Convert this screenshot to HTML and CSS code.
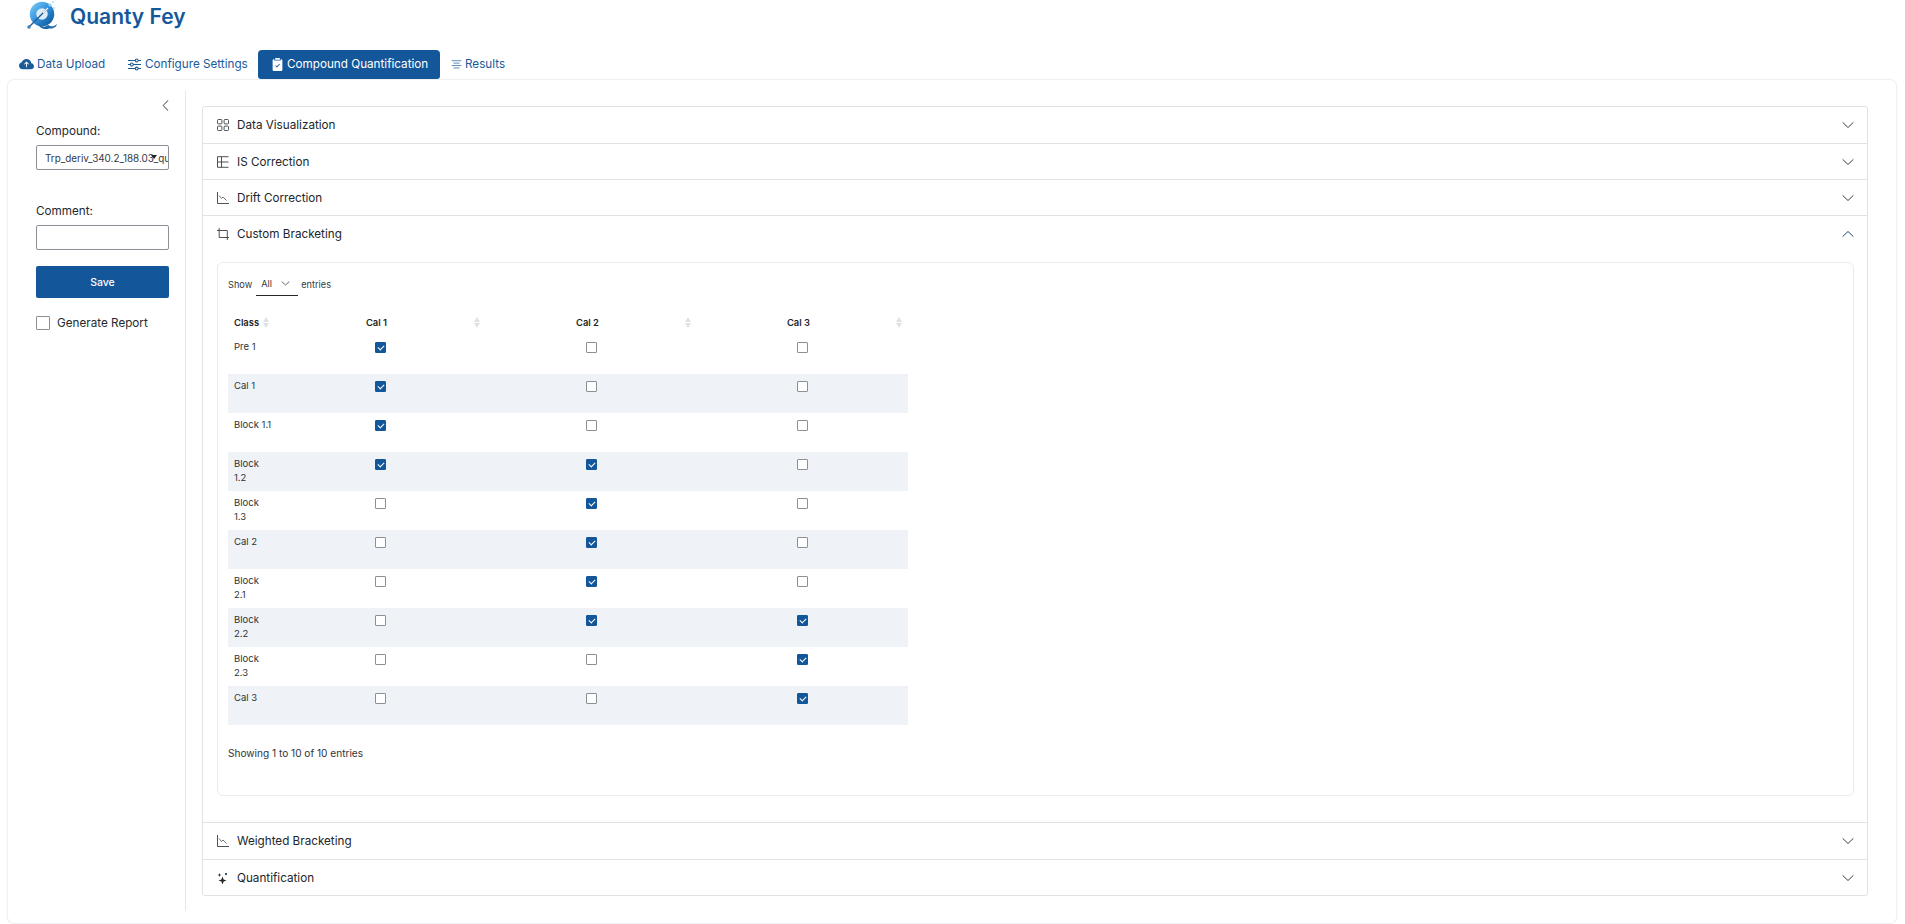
FILE: index.html
```html
<!DOCTYPE html>
<html lang="en">
<head>
<meta charset="utf-8">
<title>Quanty Fey</title>
<link rel="stylesheet" href="styles.css">
</head>
<body>
<header class="brand">
  <svg class="logo" viewBox="0 0 32 30" width="32" height="30">
    <defs><linearGradient id="lg" x1="0" y1="0" x2="1" y2="1"><stop offset="0" stop-color="#6fc0f0"/><stop offset=".5" stop-color="#2f8fdc"/><stop offset="1" stop-color="#13609f"/></linearGradient></defs>
    <circle cx="16" cy="14" r="9" fill="#dcecf8"/>
    <circle cx="16" cy="14" r="9" fill="none" stroke="url(#lg)" stroke-width="6.500"/>
    <path d="M11 23c3 3 7 5 11 2 3 2 6 2 9-1-.5 3-4 5-8 4.500-4 1.500-9 .5-12-5.500z" fill="#1868ac"/>
    <path d="M3 27 22 8" stroke="#2b5f92" stroke-width="1.500"/>
    <path d="M17 13 22 8" stroke="#e8f4fc" stroke-width="1.500"/>
    <circle cx="3" cy="27" r="1.700" fill="#3b7fbb"/>
    <circle cx="24" cy="5" r="1.600" fill="#8ed3f5"/><circle cx="28" cy="8" r=".9" fill="#a7dcf7"/><circle cx="27" cy="2" r=".9" fill="#a7dcf7"/><circle cx="30" cy="4" r=".6" fill="#c4e8fa"/>
  </svg>
  <h1 class="title">Quanty Fey</h1>
</header>
<nav class="tabs">
  <a class="tab t1"><svg class="ico" viewBox="0 0 16 16" width="15" height="15" fill="currentColor"><path d="M8 2a5.530 5.530 0 0 0-3.594 1.342c-.766.66-1.321 1.520-1.464 2.383C1.266 6.095 0 7.555 0 9.318 0 11.366 1.708 13 3.781 13h8.906C14.502 13 16 11.570 16 9.773c0-1.636-1.242-2.969-2.834-3.194C12.923 3.999 10.690 2 8 2zm2.354 5.146a.5.5 0 0 1-.708.708L8.500 6.707V10.500a.5.5 0 0 1-1 0V6.707L6.354 7.854a.5.5 0 1 1-.708-.708l2-2a.5.5 0 0 1 .708 0l2 2z"/></svg>Data Upload</a>
  <a class="tab t2"><svg class="ico" viewBox="0 0 16 16" width="13" height="13" fill="none" stroke="currentColor" stroke-width="1.300"><path d="M0 3h9M12.500 3H16M0 8h3M6.500 8H16M0 13h9M12.500 13H16"/><circle cx="10.700" cy="3" r="1.800"/><circle cx="4.700" cy="8" r="1.800"/><circle cx="10.700" cy="13" r="1.800"/></svg>Configure Settings</a>
  <a class="tab active"><svg class="ico" viewBox="0 0 16 16" width="13" height="13" fill="currentColor"><path d="M6 0h4a1 1 0 0 1 1 1v1H5V1a1 1 0 0 1 1-1z"/><path d="M3.500 1.500H4V3h8V1.500h.5A1.500 1.500 0 0 1 14 3v11.500a1.500 1.500 0 0 1-1.500 1.500h-9A1.500 1.500 0 0 1 2 14.500V3a1.500 1.500 0 0 1 1.500-1.500zm7.400 6.400-.7-.7-3 3L6 9l-.7.700 1.900 1.900 3.700-3.700z"/></svg>Compound Quantification</a>
  <a class="tab t4"><svg class="ico" viewBox="0 0 16 16" width="11" height="11" fill="none" stroke="currentColor"><path d="M1 2.500h14M3.500 6h9M1 9.500h14M3.500 13h9"/></svg>Results</a>
</nav>
<main class="card">
  <aside class="side">
    <div class="collapse"><svg viewBox="0 0 16 16" width="13" height="13" fill="currentColor"><path d="M11.350 1.650a.5.5 0 0 1 0 .7L5.700 8l5.650 5.650a.5.5 0 0 1-.7.700l-6-6a.5.5 0 0 1 0-.7l6-6a.5.500 0 0 1 .7 0z"/></svg></div>
    <label class="lbl lbl-c">Compound:</label>
    <div class="selwrap"><select class="sel"><option>Trp_deriv_340.2_188.03_quant</option></select><span class="caret"></span></div>
    <label class="lbl lbl-d">Comment:</label>
    <input class="inp" type="text">
    <button class="save">Save</button>
    <label class="gen"><input class="gencb" type="checkbox">Generate Report</label>
  </aside>
  <section class="main">
    <div class="acc">
      <div class="item">
        <div class="head tall"><svg class="aico" viewBox="0 0 12 12" fill="none" stroke="#3a3f46" stroke-width=".9"><rect x=".5" y=".5" width="4.400" height="4.400" rx=".9"/><rect x="7.100" y=".5" width="4.400" height="4.400" rx=".9"/><rect x=".5" y="7.100" width="4.400" height="4.400" rx=".9"/><rect x="7.100" y="7.100" width="4.400" height="4.400" rx=".9"/></svg><span class="atxt">Data Visualization</span><svg class="chev" viewBox="0 0 12 12" fill="none" stroke="#3c4249"><path d="M.6 3.300 6 8.500l5.400-5.200"/></svg></div>
      </div>
      <div class="item">
        <div class="head"><svg class="aico" viewBox="0 0 12 12" fill="none" stroke="#3a3f46" stroke-width=".9"><path d="M11.500.7H.5v10.600h11M4.500.7v10.600M.5 6h11"/></svg><span class="atxt">IS Correction</span><svg class="chev" viewBox="0 0 12 12" fill="none" stroke="#3c4249"><path d="M.6 3.300 6 8.500l5.400-5.200"/></svg></div>
      </div>
      <div class="item">
        <div class="head"><svg class="aico" viewBox="0 0 12 12" fill="none" stroke="#3a3f46" stroke-width=".9"><path d="M.5 0v11.500H12"/><path d="M2 3.500l2.500 3L6 5l3.500 3.500" stroke-width=".7"/></svg><span class="atxt">Drift Correction</span><svg class="chev" viewBox="0 0 12 12" fill="none" stroke="#3c4249"><path d="M.6 3.300 6 8.500l5.400-5.200"/></svg></div>
      </div>
      <div class="item">
        <div class="head"><svg class="aico" viewBox="0 0 12 12" fill="none" stroke="#3a3f46" stroke-width=".9"><path d="M0 2.500h10.300V12M2.200 0v9.500H12"/></svg><span class="atxt">Custom Bracketing</span><svg class="chev" viewBox="0 0 12 12" fill="none" stroke="#1d4d7c"><path d="M.6 8.700 6 3.500l5.400 5.200"/></svg></div>
        <div class="body">
          <div class="inner">
            <div class="length">Show <span class="lensel">All<svg viewBox="0 0 12 12" width="9" height="9" fill="none" stroke="#333"><path d="M1 3.500 6 8l5-4.500"/></svg></span> entries</div>
            <table class="tbl">
              <colgroup><col class="c0"><col class="cn"><col class="cn"><col class="cn"></colgroup>
              <thead><tr>
                <th class="th-l">Class<span class="sort s0"></span></th>
                <th>Cal 1<span class="sort"></span></th>
                <th>Cal 2<span class="sort"></span></th>
                <th>Cal 3<span class="sort"></span></th>
              </tr></thead>
              <tbody>
                <tr><td>Pre 1</td><td><input class="cb" type="checkbox" checked></td><td><input class="cb" type="checkbox"></td><td><input class="cb" type="checkbox"></td></tr>
                <tr><td>Cal 1</td><td><input class="cb" type="checkbox" checked></td><td><input class="cb" type="checkbox"></td><td><input class="cb" type="checkbox"></td></tr>
                <tr><td>Block 1.1</td><td><input class="cb" type="checkbox" checked></td><td><input class="cb" type="checkbox"></td><td><input class="cb" type="checkbox"></td></tr>
                <tr><td>Block 1.2</td><td><input class="cb" type="checkbox" checked></td><td><input class="cb" type="checkbox" checked></td><td><input class="cb" type="checkbox"></td></tr>
                <tr><td>Block 1.3</td><td><input class="cb" type="checkbox"></td><td><input class="cb" type="checkbox" checked></td><td><input class="cb" type="checkbox"></td></tr>
                <tr><td>Cal 2</td><td><input class="cb" type="checkbox"></td><td><input class="cb" type="checkbox" checked></td><td><input class="cb" type="checkbox"></td></tr>
                <tr><td>Block 2.1</td><td><input class="cb" type="checkbox"></td><td><input class="cb" type="checkbox" checked></td><td><input class="cb" type="checkbox"></td></tr>
                <tr><td>Block 2.2</td><td><input class="cb" type="checkbox"></td><td><input class="cb" type="checkbox" checked></td><td><input class="cb" type="checkbox" checked></td></tr>
                <tr><td>Block 2.3</td><td><input class="cb" type="checkbox"></td><td><input class="cb" type="checkbox"></td><td><input class="cb" type="checkbox" checked></td></tr>
                <tr><td>Cal 3</td><td><input class="cb" type="checkbox"></td><td><input class="cb" type="checkbox"></td><td><input class="cb" type="checkbox" checked></td></tr>
              </tbody>
            </table>
            <div class="info">Showing 1 to 10 of 10 entries</div>
          </div>
        </div>
      </div>
      <div class="item">
        <div class="head tall"><svg class="aico" viewBox="0 0 12 12" fill="none" stroke="#3a3f46" stroke-width=".9"><path d="M.5 0v11.500H12"/><path d="M2 3.500l2.500 3L6 5l3.500 3.500" stroke-width=".7"/></svg><span class="atxt">Weighted Bracketing</span><svg class="chev" viewBox="0 0 12 12" fill="none" stroke="#3c4249"><path d="M.6 3.300 6 8.500l5.400-5.200"/></svg></div>
      </div>
      <div class="item">
        <div class="head"><svg class="aico" viewBox="0 0 12 12" fill="#23272c"><path d="M5.500 4.500 6.600 7.400 9.500 8.500 6.600 9.600 5.500 12.500 4.400 9.600 1.500 8.500 4.400 7.400z"/><path d="M2.500 1 3 2.500 4.500 3 3 3.500 2.500 5 2 3.500.5 3 2 2.500z"/><circle cx="9" cy="2" r="1.100"/></svg><span class="atxt">Quantification</span><svg class="chev" viewBox="0 0 12 12" fill="none" stroke="#3c4249"><path d="M.6 3.300 6 8.500l5.400-5.200"/></svg></div>
      </div>
    </div>
  </section>
</main>
</body>
</html>
```
FILE: styles.css
```css
* { box-sizing: border-box; }
html, body { margin: 0; padding: 0; background: #fff; }
body { font-family: Inter, "Liberation Sans", sans-serif; color: #22262b; height: 924px; overflow: hidden; }

.brand { height: 50px; display: flex; align-items: flex-start; padding: 0 0 0 26px; gap: 12px; }
.logo { display: block; }
.title { margin: 2px 0 0; font-size: 21px; line-height: 30px; font-weight: 600; color: #15589a; }

.tabs { height: 29px; display: flex; align-items: stretch; padding-left: 19px; font-size: 11.7px; color: #1a5b9a; white-space: nowrap; }
.tab { display: flex; align-items: center; gap: 3px; padding-bottom: 1px; }
.t1 { width: 109px; }
.t2 { width: 130px; gap: 4px; }
.active { width: 182px; background: #14569a; color: #fff; border-radius: 4px 4px 3px 3px; padding-left: 13px; gap: 3px; }
.t4 { padding-left: 11px; gap: 3px; }

.card { margin: 0 8px 0 7px; height: 845px; border: 1px solid #eef0f2; border-radius: 7px; box-shadow: 0 0 2px rgba(0, 0, 0, .06); display: flex; padding: 10px 0 12px; }
.side { width: 178px; border-right: 1px solid #e6e8ec; padding: 0 0 0 28px; flex: none; }
.collapse { height: 26px; padding: 9px 0 0 123px; color: #5a6068; line-height: 0; }
.lbl { display: block; font-size: 11.7px; line-height: 16px; color: #25292e; }
.lbl-c { margin-top: 7px; }
.selwrap { position: relative; width: 133px; height: 25px; margin-top: 6px; }
.sel { appearance: none; -webkit-appearance: none; display: block; width: 100%; height: 100%; border: 1px solid #8b9096; border-radius: 2px; background: #fff; font: 9.9px Inter, sans-serif; color: #333a42; padding: 0 0 0 8px; }
.caret { position: absolute; left: 115px; top: 10px; border: 3px solid transparent; border-top: 4px solid #222; border-bottom: 0; }
.lbl-d { margin-top: 33px; }
.inp { display: block; width: 133px; height: 25px; margin-top: 6px; border: 1px solid #8b9096; border-radius: 2px; background: #fff; }
.save { display: block; width: 133px; height: 32px; margin-top: 16px; border: 0; border-radius: 2px; background: #14569a; color: #fff; font: 500 10.5px Inter, sans-serif; }
.gen { display: flex; align-items: center; gap: 7px; margin-top: 17px; font-size: 11.7px; line-height: 16px; color: #25292e; }
.gencb { appearance: none; -webkit-appearance: none; width: 14px; height: 14px; margin: 0; border: 1px solid #8b9096; border-radius: 1px; background: #fff; }

.main { flex: 1; padding: 16px 28px 0 16px; }
.acc { border: 1px solid #dfe2e6; border-radius: 3px; }
.item + .item { border-top: 1px solid #dfe2e6; }
.head { height: 35px; display: flex; align-items: center; padding: 0 13px 0 14px; font-size: 11.7px; color: #22262b; }
.tall { height: 36px; }
.aico { width: 12px; height: 12px; flex: none; }
.atxt { flex: 1; margin-left: 8px; }
.chev { width: 12px; height: 12px; flex: none; }
.body { padding: 11px 13px 26px 14px; }
.inner { height: 534px; border: 1px solid #e9ebee; border-radius: 6px; padding: 0 0 0 10px; font-size: 10.1px; }
.length { height: 33px; display: flex; align-items: flex-end; line-height: 22px; color: #33383e; font-size: 9.2px; }
.lensel { width: 42px; height: 33px; margin: 0 3px 0 4px; border-bottom: 1px solid #23272c; display: flex; align-items: flex-end; padding: 0 0 0 5px; gap: 9px; }
.lensel svg { margin-bottom: 7px; }
.tbl { border-collapse: collapse; table-layout: fixed; width: 680px; margin-top: 19px; font-size: 9.5px; }
.c0 { width: 47px; }
.cn { width: 211px; }
.tbl th { position: relative; height: 20px; padding: 0 14px 5px 6px; text-align: center; font-weight: 600; color: #1f2327; font-size: 9.4px; }
.tbl th.th-l { padding-right: 0; text-align: left; white-space: nowrap; }
.sort { position: absolute; right: 6px; top: 4px; width: 6px; height: 10px; }
.sort.s0 { right: auto; left: 35px; }
.sort::before, .sort::after { content: ""; position: absolute; left: 0; border: 3px solid transparent; }
.sort::before { top: -2px; border-bottom: 5px solid #dfe1e4; border-top: 0; }
.sort::after { top: 4px; border-top: 5px solid #dfe1e4; border-bottom: 0; }
.tbl td { height: 39px; padding: 5px 6px 0; vertical-align: top; text-align: center; line-height: 14.400px; color: #2e3338; }
.tbl td:first-child { text-align: left; padding-right: 2.700px; }
.tbl tbody tr:nth-child(even) { background: #eff2f7; }
.cb { appearance: none; -webkit-appearance: none; display: block; position: relative; width: 11px; height: 11px; margin: 2px auto 0; border: 1px solid #8b9096; border-radius: 1px; background: #fff; }
.cb:checked { background: #14569a; border-color: #14569a; }
.cb:checked::after { content: ""; position: absolute; left: 2px; top: 1.500px; width: 5px; height: 3px; border-left: 1.500px solid #fff; border-bottom: 1.500px solid #fff; transform: rotate(-45deg); }
.info { margin-top: 21px; line-height: 14px; color: #2f3439; }
```
